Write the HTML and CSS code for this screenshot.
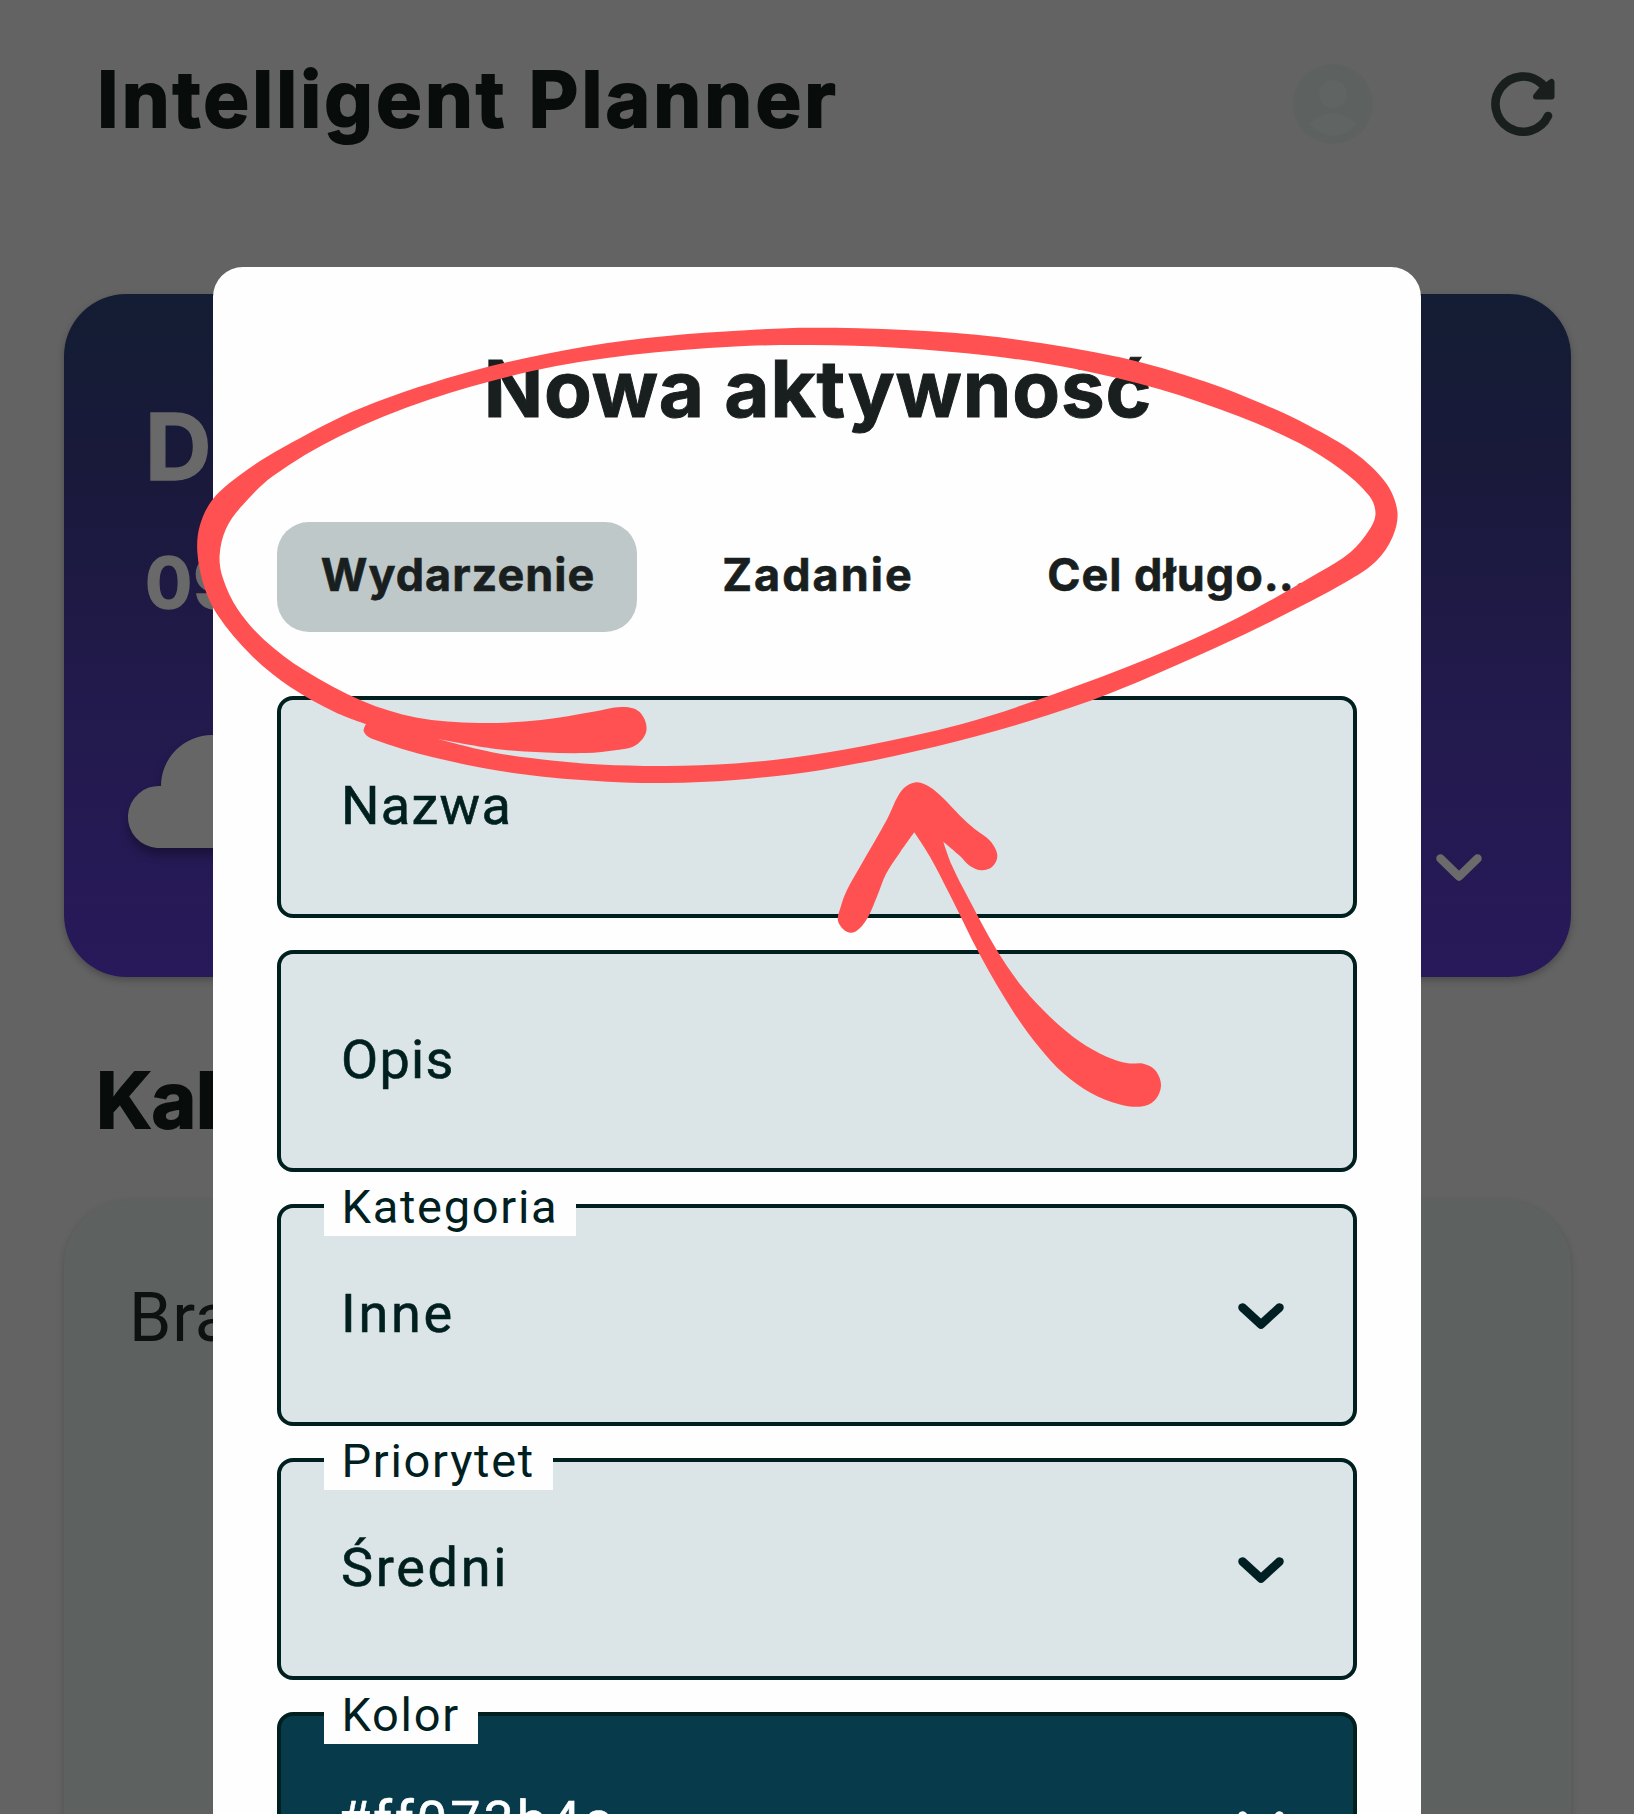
FILE: index.html
```html
<!DOCTYPE html>
<html lang="pl">
<head>
<meta charset="utf-8">
<title>Intelligent Planner</title>
<link rel="stylesheet" href="styles.css">
</head>
<body>
<div class="screen">
  <div class="page">
    <header class="header">
      <h1 class="heading app-name">Intelligent Planner</h1>
      <svg class="avatar" viewBox="0 0 80 80"><circle cx="40" cy="40" r="40" fill="#5d6261"/><circle cx="40" cy="30" r="14" fill="#606463"/><path d="M16 60Q40 38 64 60Q40 84 16 60Z" fill="#606463"/></svg>
      <svg class="refresh" viewBox="0 0 66 66"><path d="M58 45A27.6 27.6 0 1 1 52 13" fill="none" stroke="#191f1d" stroke-width="8.6" stroke-linecap="round"/><path d="M61.500 11V25.500H46L53 17Z" fill="#191f1d" stroke="#191f1d" stroke-width="6" stroke-linejoin="round"/></svg>
    </header>
    <section class="weather">
      <div class="day">D</div>
      <div class="date">09</div>
      <div class="weather-row">
        <svg class="cloud" viewBox="0 0 160 113"><path d="M31 113A31 31 0 1 1 35 51A51 51 0 0 1 137 51A31 31 0 0 1 129 113Z" fill="#666666"/></svg>
        <svg class="chevron" viewBox="0 0 46 27"><path d="M4.500 4.500L23 22.500L41.500 4.500" fill="none" stroke="#6b6b6b" stroke-width="8.500" stroke-linecap="round" stroke-linejoin="round"/></svg>
      </div>
    </section>
    <h2 class="heading section-name">Kal</h2>
    <section class="calendar">Bra</section>
  </div>

  <div class="modal">
    <h2 class="modal-title">Nowa aktywność</h2>
    <div class="tabs">
      <div class="tab active">Wydarzenie</div>
      <div class="tab tab-task">Zadanie</div>
      <div class="tab">Cel długo<span class="dots">...</span></div>
    </div>
    <div class="fields">
      <div class="field"><span class="value">Nazwa</span></div>
      <div class="field"><span class="value">Opis</span></div>
      <div class="field"><span class="label">Kategoria</span><span class="value wide">Inne</span>
        <svg class="chevron" viewBox="0 0 46 27"><path d="M4.500 4.500L23 21.500L41.500 4.500" fill="none" stroke="#001f23" stroke-width="8.500" stroke-linecap="round" stroke-linejoin="round"/></svg></div>
      <div class="field"><span class="label">Priorytet</span><span class="value wide">Średni</span>
        <svg class="chevron" viewBox="0 0 46 27"><path d="M4.500 4.500L23 21.500L41.500 4.500" fill="none" stroke="#001f23" stroke-width="8.500" stroke-linecap="round" stroke-linejoin="round"/></svg></div>
      <div class="field dark"><span class="label">Kolor</span><span class="value wide">#ff073b4c</span>
        <svg class="chevron" viewBox="0 0 46 27"><path d="M4.500 4.500L23 21.500L41.500 4.500" fill="none" stroke="#ffffff" stroke-width="8.500" stroke-linecap="round" stroke-linejoin="round"/></svg></div>
    </div>
  </div>

  <svg class="marks" viewBox="0 0 1634 1814" fill="#ff5152" fill-rule="evenodd"><path id="loop"/><path id="arrow"/></svg>
</div>
<script src="marks.js"></script>
</body>
</html>
```
FILE: styles.css
```css
* { box-sizing: border-box; }
body { margin: 0; background: #636363; }
.screen {
  position: relative;
  width: 1634px;
  height: 1814px;
  overflow: hidden;
  background: #636363;
  font-family: Inter, "Liberation Sans", sans-serif;
}
h1, h2 { margin: 0; }
.page { display: flex; flex-direction: column; padding: 0 63px 0 64px; height: 1814px; }
.header { display: flex; align-items: center; height: 207px; padding-left: 33px; flex: none; }
.heading { font-size: 77px; font-weight: 700; line-height: 96px; color: #080d0b; white-space: nowrap; -webkit-text-stroke: 2px #080d0b; }
.app-name { margin: 0 auto 9px 0; letter-spacing: 3.1px; }
.avatar { width: 80px; height: 80px; margin-right: 117px; }
.refresh { width: 66px; height: 66px; margin-right: 15px; }

.weather {
  flex: none;
  display: flex;
  flex-direction: column;
  margin-top: 87px;
  height: 683px;
  border-radius: 62px;
  padding: 103px 89px 0 81px;
  background: linear-gradient(#131d33, #19193a 25%, #221a4c 60%, #28195a);
  box-shadow: 0 3px 7px rgba(0, 0, 0, .25);
  color: #696969;
  font-weight: 700;
}
.day { font-size: 92px; line-height: 100px; -webkit-text-stroke: 1.5px #696969; }
.date { font-size: 70px; line-height: 80px; margin-top: 46px; letter-spacing: 1px; -webkit-text-stroke: 1.5px #696969; }
.weather-row { display: flex; justify-content: space-between; margin: 112px 0 0 -19px; }
.cloud { width: 160px; height: 113px; filter: drop-shadow(0 7px 4px rgba(0, 0, 0, .3)); }
.chevron { width: 46px; height: 27px; flex: none; }
.weather .chevron { margin-top: 119px; }

.section-name { margin: 75px 0 0 32px; line-height: 96px; }
.calendar {
  flex: none;
  margin-top: 52px;
  height: 700px;
  padding: 78px 65px;
  border-radius: 66px;
  background: #5d615f;
  box-shadow: 0 3px 7px rgba(0, 0, 0, .18);
  font: 400 68px/80px Roboto, sans-serif;
  letter-spacing: .8px;
  color: #0d1110;
}

.modal {
  position: absolute;
  left: 213px;
  top: 267px;
  width: 1208px;
  height: 1700px;
  padding: 76px 64px 0;
  border-radius: 30px;
  background: #fefefe;
}
.modal-title { padding-left: 2px; text-align: center; font-size: 78px; line-height: 92px; font-weight: 700; letter-spacing: .9px; color: #191f1f; white-space: nowrap; -webkit-text-stroke: 1px #191f1f; }
.tabs { display: grid; grid-template-columns: repeat(3, 1fr); margin-top: 87px; height: 110px; }
.tab { padding-left: 2px; text-align: center; line-height: 106px; border-radius: 32px; font-size: 45px; font-weight: 700; letter-spacing: 1px; color: #191f1f; white-space: nowrap; -webkit-text-stroke: .6px #191f1f; }
.tab-task { letter-spacing: 2px; }
.dots { letter-spacing: 0; }
.tab.active { background: #bfc8c9; }
.fields { display: flex; flex-direction: column; gap: 32.1px; margin-top: 64px; }
.field {
  position: relative;
  display: flex;
  align-items: center;
  justify-content: space-between;
  flex: none;
  height: 222px;
  padding: 0 69px 0 60px;
  border: 4px solid #00201f;
  border-radius: 16px;
  background: #dbe4e6;
  font: 400 54px/64px Roboto, sans-serif;
  color: #00201f;
}
.field.dark { background: #073b4c; color: #fff; }
.value { margin-top: -2px; letter-spacing: 1.3px; -webkit-text-stroke: .6px currentColor; }
.value.wide { letter-spacing: 2.700px; }
.dark .value.wide { margin: -4px 0 0 -4px; letter-spacing: 3px; }
.field .chevron { margin-top: 2px; }
.label {
  position: absolute;
  left: 43px;
  top: -25px;
  height: 53px;
  padding: 0 18px 0 17.500px;
  background: #fefefe;
  color: #00201f;
  font-size: 47px;
  line-height: 48px;
  letter-spacing: 1.700px;
  white-space: nowrap;
}
.marks { position: absolute; left: 0; top: 0; width: 1634px; height: 1814px; }
```
FILE: marks.js
```js
// Outlines of the hand-drawn marker shapes; smoothed into closed curves.
// A point with a third value is a sharp corner.
const loopOuter = [
  [812,327.8],[750,330],[667,336],[585.7,346.500],[474,370.5],[362.5,407.5],[282,448],[240,475],[213,499],[200,525],[197.3,551.7],
  [204,586],[217.4,614.8],[251,655],[291,687.6],[335.7,712.4],[366,724,1],[363.8,731.6],[371.4,738.5],[434,757.6],
  [518.8,773.7],[608,781.8],[666,783],[735,780],[821.7,769.9],[934,746.9],[1027.7,721.500],[1112,692.500],[1215,648],[1275.8,619],
  [1346,582],[1376,561.3],[1392.8,536.4],[1397.3,511],[1385.8,482.8],[1355,453],[1308.6,425.500],[1261.7,403.500],[1205.6,381.800],
  [1121,357.500],[999.6,337.3],[906,330]
];
const loopInner = [
  [812,345],[896.6,347.7],[990,355.8],[1074.5,368.8],[1158.8,389],[1238,416],[1299,443],[1341,469.5],[1369.4,496],
  [1375.5,513.4],[1369.4,529.8],[1350.7,552],[1318,573],[1238,617.8],[1149.4,658],[1051,695.2],[962,724],[863.8,746],
  [793.6,757.5],[735,763.500],[666,766],[600,764.500],[554,760.7],[496,753],[438,739,1],[496,749],[541,752.2],[585.7,753],[617,750],[636,745],
  [646.5,729.7],[639,711.500],[621,707],[594.6,711.5],[541,720],[478.6,723],[416,717.4],[362.5,701],[304.5,670.3],
  [264,639.7],[237.5,609],[223,578.5],[219.6,555.5],[226,528.7],[242,505.8],[273,476],[340,436],[429.5,399.5],
  [532,371],[630,355],[735,346.500]
];
const arrow = [
  [916,782.3],[929,786.5],[943.3,798.3],[960,815.7],[975,829.3],[990,840.7],[997.3,855],[992.5,866.5],[981.7,870.3],[970,866],
  [960,856],[943.3,841.7,1],[951.7,865],[966.7,895],[996.7,950],[1023.3,988.3],[1053.3,1020],[1080,1041.7],
  [1106.7,1056.7],[1128,1063.3],[1143.3,1063.7],[1155,1070],[1161,1085],[1155,1100],[1141.7,1106.5],[1120,1104.5],[1090,1092.5],[1063.3,1073.3],
  [1040,1048.3],[1013.3,1011.7],[980,955],[950,895],[930,856.7],[914.3,832.3,1],[900,852.500],[886,874],
  [876,899],[865,922],[851,932.7],[838.3,922],[841,906],[847,890],[860,866.7],[886.7,820],[901.7,790.5]
];

function smooth(points) {
  const n = points.length;
  const at = i => points[(i + n) % n];
  let d = `M${at(0)[0]} ${at(0)[1]}`;
  for (let i = 0; i < n; i++) {
    const p0 = at(i - 1), p1 = at(i), p2 = at(i + 1), p3 = at(i + 2);
    const len = Math.hypot(p2[0] - p1[0], p2[1] - p1[1]) / 3;
    const handle = (a, b, corner) => {
      const l = Math.hypot(b[0] - a[0], b[1] - a[1]);
      return corner ? [0, 0] : [(b[0] - a[0]) / l * len, (b[1] - a[1]) / l * len];
    };
    const h1 = handle(p0, p2, p1[2]), h2 = handle(p1, p3, p2[2]);
    d += `C${p1[0] + h1[0]} ${p1[1] + h1[1]} ${p2[0] - h2[0]} ${p2[1] - h2[1]} ${p2[0]} ${p2[1]}`;
  }
  return d + 'Z';
}

document.getElementById('loop').setAttribute('d', smooth(loopOuter) + smooth(loopInner));
document.getElementById('arrow').setAttribute('d', smooth(arrow));
```
